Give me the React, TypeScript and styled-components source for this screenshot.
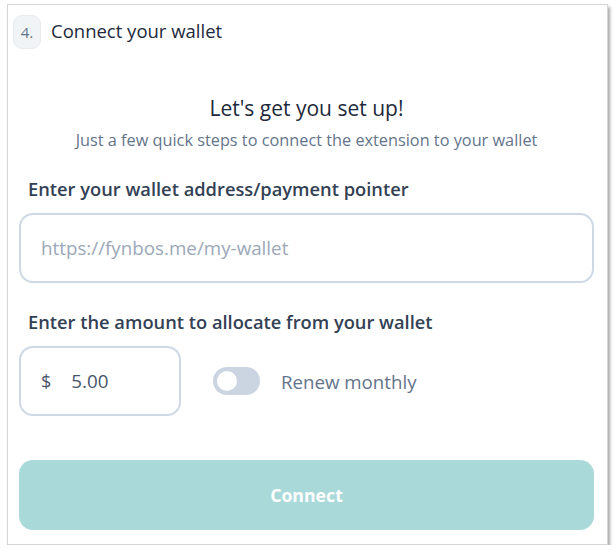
import React, { FC, useState } from 'react';
import styled, { createGlobalStyle } from 'styled-components';

const GlobalStyle = createGlobalStyle`
  body {
    margin: 0;
    background: #ffffff;
    font-family: "Open Sans", Lato, sans-serif;
  }
`;

const Page = styled.main`
  padding: 4px 0 0 7px;
`;

const Card = styled.section`
  width: 599px;
  height: 539px;
  box-sizing: content-box;
  border: 1px solid #d6d6d6;
  background: #ffffff;
  box-shadow: 2px 3px 3px rgba(0, 0, 0, 0.35);
  display: flex;
  flex-direction: column;
`;

const Header = styled.header`
  display: flex;
  align-items: center;
  gap: 10px;
  padding: 10px 0 0 5px;
`;

const StepBadge = styled.span`
  width: 28px;
  height: 34px;
  border-radius: 9px;
  background: #f1f4f7;
  border: 1px solid #e8ecf0;
  box-sizing: border-box;
  display: flex;
  align-items: center;
  justify-content: center;
  color: #64748b;
  font-size: 15px;
`;

const StepTitle = styled.h2`
  margin: 0 0 3px;
  font-size: 18.5px;
  font-weight: 400;
  color: #1e293b;
`;

const Body = styled.div`
  display: flex;
  flex-direction: column;
  padding: 0 13px 14px 11px;
  flex: 1;
`;

const Heading = styled.h1`
  margin: 45px 0 0;
  text-align: center;
  font-size: 21px;
  line-height: 28px;
  font-weight: 400;
  color: #1e293b;
`;

const Subtitle = styled.p`
  margin: 6px 0 0;
  text-align: center;
  font-size: 16.3px;
  line-height: 24px;
  color: #64748b;
`;

const Label = styled.label<{ $top: number }>`
  margin: ${(p) => p.$top}px 0 0 9px;
  font-size: 18.3px;
  line-height: 24px;
  font-weight: 600;
  color: #334155;
`;

const Field = styled.div<{ $width?: number }>`
  margin-top: 12px;
  height: 70px;
  width: ${(p) => (p.$width ? `${p.$width}px` : '100%')};
  box-sizing: border-box;
  border: 2px solid #cfd9e5;
  border-radius: 14px;
  display: flex;
  align-items: center;
  padding: 0 20px;
  gap: 20px;
`;

const TextInput = styled.input`
  flex: 1;
  min-width: 0;
  border: none;
  outline: none;
  background: transparent;
  font-family: inherit;
  font-size: 18.8px;
  color: #475569;
  padding: 0;

  &::placeholder {
    color: #9ba8b9;
  }
`;

const Currency = styled.span`
  font-size: 18px;
  color: #475569;
`;

const AmountRow = styled.div`
  display: flex;
  align-items: flex-end;
  gap: 32px;
`;

const ToggleWrap = styled.label`
  display: flex;
  align-items: center;
  gap: 21px;
  height: 70px;
  cursor: pointer;
`;

const Track = styled.span<{ $on: boolean }>`
  width: 47px;
  height: 28px;
  border-radius: 14px;
  background: ${(p) => (p.$on ? '#56b7b5' : '#cbd5e1')};
  display: flex;
  align-items: center;
  padding: 0 4px;
  box-sizing: border-box;
  justify-content: ${(p) => (p.$on ? 'flex-end' : 'flex-start')};
`;

const Knob = styled.span`
  width: 20px;
  height: 20px;
  border-radius: 50%;
  background: #ffffff;
`;

const ToggleText = styled.span`
  font-size: 18.7px;
  color: #64748b;
`;

const ConnectButton = styled.button`
  margin-top: auto;
  height: 70px;
  width: 100%;
  border: none;
  border-radius: 14px;
  background: #a9d9d9;
  color: #ffffff;
  font-family: inherit;
  font-size: 17.7px;
  font-weight: 700;
  cursor: not-allowed;
`;

const App: FC = () => {
  const [renew, setRenew] = useState(false);
  const [amount, setAmount] = useState('5.00');

  return (
    <Page>
      <GlobalStyle />
      <Card>
        <Header>
          <StepBadge>4.</StepBadge>
          <StepTitle>Connect your wallet</StepTitle>
        </Header>
        <Body>
          <Heading>Let's get you set up!</Heading>
          <Subtitle>Just a few quick steps to connect the extension to your wallet</Subtitle>

          <Label $top={25} htmlFor="wallet">Enter your wallet address/payment pointer</Label>
          <Field>
            <TextInput id="wallet" placeholder="https://fynbos.me/my-wallet" />
          </Field>

          <Label $top={27} htmlFor="amount">Enter the amount to allocate from your wallet</Label>
          <AmountRow>
            <Field $width={162}>
              <Currency>$</Currency>
              <TextInput id="amount" value={amount} onChange={(e) => setAmount(e.target.value)} />
            </Field>
            <ToggleWrap onClick={() => setRenew(!renew)}>
              <Track $on={renew}>
                <Knob />
              </Track>
              <ToggleText>Renew monthly</ToggleText>
            </ToggleWrap>
          </AmountRow>

          <ConnectButton disabled>Connect</ConnectButton>
        </Body>
      </Card>
    </Page>
  );
};

export default App;
